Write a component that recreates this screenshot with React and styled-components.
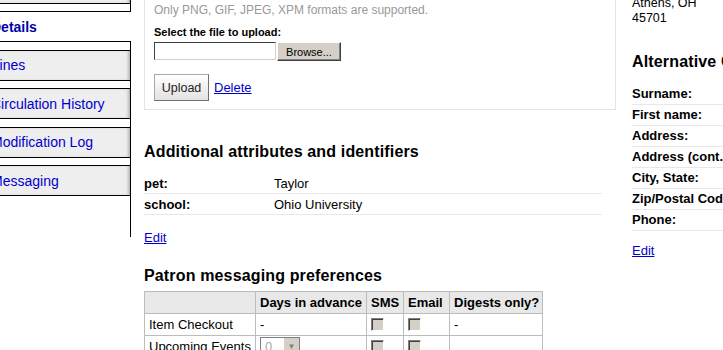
import React from "react";
import styled, { createGlobalStyle } from "styled-components";

const GlobalStyle = createGlobalStyle`
  html, body {
    margin: 0;
    padding: 0;
    background: #fff;
    overflow: hidden;
  }
  body {
    font-family: "Liberation Sans", Arial, sans-serif;
    font-size: 13px;
    color: #000;
  }
`;

const TABS = [
  { label: "Check out" },
  { label: "Details", active: true },
  { label: "Fines" },
  { label: "Circulation History" },
  { label: "Modification Log" },
  { label: "Messaging" },
];

const ATTRIBUTES = [
  { name: "pet:", value: "Taylor" },
  { name: "school:", value: "Ohio University" },
];

const ALT_FIELDS = [
  "Surname:",
  "First name:",
  "Address:",
  "Address (cont.):",
  "City, State:",
  "Zip/Postal Code:",
  "Phone:",
];

function CheckBox() {
  return <StyledCheck />;
}

export default function App() {
  return (
    <>
      <GlobalStyle />
      <Page>
        <Nav>
          <TabList>
            {TABS.map((t, i) => (
              <Tab key={t.label} $active={t.active} $first={i === 0}>
                <TabLink href="#" $active={t.active}>
                  {t.label}
                </TabLink>
              </Tab>
            ))}
          </TabList>
        </Nav>

        <Main>
          <UploadBox>
            <Hint>Only PNG, GIF, JPEG, XPM formats are supported.</Hint>
            <FieldLabel>Select the file to upload:</FieldLabel>
            <FileRow>
              <FileInput />
              <BrowseBtn type="button">Browse...</BrowseBtn>
            </FileRow>
            <ActionRow>
              <UploadBtn type="button">Upload</UploadBtn>
              <Link href="#">Delete</Link>
            </ActionRow>
          </UploadBox>

          <Heading $top={32}>Additional attributes and identifiers</Heading>
          <AttrList>
            {ATTRIBUTES.map((a) => (
              <AttrRow key={a.name}>
                <AttrName>{a.name}</AttrName>
                <span>{a.value}</span>
              </AttrRow>
            ))}
          </AttrList>
          <EditLine $top={16}>
            <Link href="#">Edit</Link>
          </EditLine>

          <Heading $top={21}>Patron messaging preferences</Heading>
          <PrefTable>
            <colgroup>
              <col style={{ width: 111 }} />
              <col style={{ width: 111 }} />
              <col style={{ width: 37 }} />
              <col style={{ width: 46 }} />
              <col style={{ width: 93 }} />
            </colgroup>
            <thead>
              <tr>
                <Th />
                <Th>Days in advance</Th>
                <Th>SMS</Th>
                <Th>Email</Th>
                <Th>Digests only?</Th>
              </tr>
            </thead>
            <tbody>
              <tr>
                <Td>Item Checkout</Td>
                <Td>-</Td>
                <Td>
                  <CheckBox />
                </Td>
                <Td>
                  <CheckBox />
                </Td>
                <Td>-</Td>
              </tr>
              <tr>
                <Td>Upcoming Events</Td>
                <Td>
                  <DaysSelect>
                    <span>0</span>
                    <SelectArrow>▼</SelectArrow>
                  </DaysSelect>
                </Td>
                <Td>
                  <CheckBox />
                </Td>
                <Td>
                  <CheckBox />
                </Td>
                <Td />
              </tr>
            </tbody>
          </PrefTable>
        </Main>

        <Side>
          <Address>
            Athens, OH
            <br />
            45701
          </Address>
          <Heading $top={26}>Alternative Contact</Heading>
          <AltList>
            {ALT_FIELDS.map((f) => (
              <AltRow key={f}>{f}</AltRow>
            ))}
          </AltList>
          <EditLine $top={13}>
            <Link href="#">Edit</Link>
          </EditLine>
        </Side>
      </Page>
    </>
  );
}

const Page = styled.div`
  display: flex;
  align-items: flex-start;
  width: 1000px;
  height: 350px;
`;

const Nav = styled.div`
  flex: none;
  width: 148px;
  margin-left: -18px;
  padding-bottom: 33px;
  border-right: 1px solid #000;
`;

const TabList = styled.ul`
  list-style: none;
  margin: 0;
  padding: 0;
`;

const Tab = styled.li`
  height: 29px;
  margin-top: ${(p) => (p.$first ? "-27.5px" : "0")};
  margin-bottom: 7.5px;
  margin-right: ${(p) => (p.$active ? "-1px" : "0")};
  border: 1px solid #000;
  border-right: 0;
  background: ${(p) => (p.$active ? "#fff" : "#eeeeee")};
  box-shadow: ${(p) => (p.$active ? "none" : "inset -3px 0 3px -1px #b8b8b8")};
  display: flex;
  align-items: center;
`;

const TabLink = styled.a`
  padding-left: 8px;
  font-size: 14px;
  font-weight: ${(p) => (p.$active ? 700 : 400)};
  color: ${(p) => (p.$active ? "#0000aa" : "#0000cc")};
  text-decoration: none;
  white-space: nowrap;
`;

const Main = styled.div`
  flex: none;
  width: 472px;
  margin-left: 13px;
`;

const UploadBox = styled.div`
  margin-top: -20px;
  padding: 20px 9px 8px;
  border: 1px solid #e4e4e4;
`;

const Hint = styled.p`
  margin: 0;
  line-height: 18px;
  font-size: 12px;
  color: #999;
`;

const FieldLabel = styled.div`
  margin-top: 7px;
  line-height: 13px;
  font-size: 11px;
  font-weight: 700;
`;

const FileRow = styled.div`
  display: flex;
  align-items: flex-start;
  margin-top: 3px;
`;

const FileInput = styled.div`
  box-sizing: border-box;
  width: 122px;
  height: 18px;
  background: #fff;
  border: 1px solid #d4d0c8;
  border-top-color: #404040;
  border-left-color: #404040;
`;

const BrowseBtn = styled.button`
  box-sizing: border-box;
  width: 64px;
  height: 19px;
  margin: 0 0 0 1px;
  padding: 0;
  font-family: "Liberation Sans", Arial, sans-serif;
  font-size: 11px;
  color: #000;
  background: #d4d0c8;
  border: 1px solid #404040;
  border-top-color: #fff;
  border-left-color: #fff;
  box-shadow: inset -1px -1px 0 #808080;
`;

const ActionRow = styled.div`
  display: flex;
  align-items: center;
  gap: 5px;
  margin-top: 13px;
`;

const UploadBtn = styled.button`
  box-sizing: border-box;
  width: 55px;
  height: 27px;
  padding: 0;
  font-family: "Liberation Sans", Arial, sans-serif;
  font-size: 12.5px;
  color: #222;
  background: linear-gradient(#ffffff, #e2e2e2);
  border: 1px solid #a8a8a8;
  border-right-color: #707070;
  border-bottom-color: #707070;
`;

const Link = styled.a`
  color: #0000cc;
  font-size: 13px;
  text-decoration: underline;
`;

const Heading = styled.h3`
  margin: ${(p) => p.$top}px 0 0;
  font-size: 16px;
  letter-spacing: 0.15px;
  line-height: 20px;
  font-weight: 700;
  color: #000;
  white-space: nowrap;
`;

const AttrList = styled.div`
  width: 458px;
  margin-top: 11px;
`;

const AttrRow = styled.div`
  display: flex;
  align-items: center;
  height: 20px;
  border-bottom: 1px solid #e8e8e8;
`;

const AttrName = styled.span`
  width: 130px;
  font-weight: 700;
`;

const EditLine = styled.div`
  margin-top: ${(p) => p.$top}px;
  line-height: 14px;
`;

const PrefTable = styled.table`
  margin-top: 5px;
  border-collapse: collapse;
  table-layout: fixed;
  width: 398px;
`;

const Th = styled.th`
  height: 21px;
  padding: 0 4px;
  background: #e8e8e8;
  border: 1px solid #bcbcbc;
  font-size: 13px;
  text-align: left;
  white-space: nowrap;
`;

const Td = styled.td`
  height: 21px;
  padding: 0 4px;
  border: 1px solid #bcbcbc;
  font-size: 13px;
  white-space: nowrap;
  vertical-align: middle;
`;

const StyledCheck = styled.span`
  display: block;
  box-sizing: border-box;
  width: 13px;
  height: 13px;
  background: #d4d0c8;
  border: 1px solid #fff;
  border-top-color: #808080;
  border-left-color: #808080;
  box-shadow: inset 1px 1px 0 #404040;
`;

const DaysSelect = styled.span`
  display: inline-flex;
  align-items: center;
  justify-content: space-between;
  box-sizing: border-box;
  width: 40px;
  height: 19px;
  padding-left: 4px;
  border: 1px solid #808080;
  background: #fff;
  color: #aaa;
  vertical-align: middle;
`;

const SelectArrow = styled.span`
  display: flex;
  align-items: center;
  justify-content: center;
  width: 15px;
  height: 17px;
  background: #d4d0c8;
  color: #808080;
  font-size: 8px;
`;

const Side = styled.div`
  flex: none;
  width: 260px;
  margin-left: 16px;
  margin-top: -4px;
`;

const Address = styled.div`
  line-height: 15px;
  font-size: 12.5px;
`;

const AltList = styled.div`
  margin-top: 12px;
`;

const AltRow = styled.div`
  height: 20px;
  line-height: 20px;
  border-bottom: 1px solid #e8e8e8;
  font-weight: 700;
  white-space: nowrap;
`;
